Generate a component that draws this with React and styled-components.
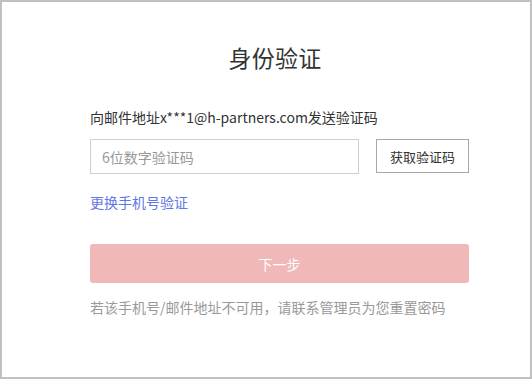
import React, { useState } from 'react';
import styled, { createGlobalStyle } from 'styled-components';

const GlobalStyle = createGlobalStyle`
  html, body {
    margin: 0;
    padding: 0;
    background: #fff;
  }
  body {
    font-family: "Noto Sans CJK SC", "Noto Sans", sans-serif;
  }
`;

const Frame = styled.div`
  width: 532px;
  height: 379px;
  box-sizing: border-box;
  border: 2px solid #c0c0c0;
  background: #fff;
  display: flex;
  flex-direction: column;
  align-items: flex-start;
  padding-left: 88px;
`;

const Panel = styled.div`
  width: 379px;
  display: flex;
  flex-direction: column;
`;

const Title = styled.h1`
  margin: 39px 0 0;
  padding-right: 9px;
  font-size: 23px;
  font-weight: 400;
  line-height: 32px;
  color: #333;
  text-align: center;
  letter-spacing: 0.3px;
`;

const Label = styled.div`
  margin-top: 34px;
  font-size: 14px;
  line-height: 20px;
  color: #333;
`;

const Row = styled.div`
  margin-top: 12px;
  display: flex;
  align-items: flex-start;
  justify-content: space-between;
`;

const Input = styled.input`
  width: 269px;
  height: 35px;
  box-sizing: border-box;
  border: 1px solid #cfcfcf;
  padding: 0 11px;
  font-family: inherit;
  font-size: 14px;
  color: #333;
  outline: none;
  &::placeholder {
    color: #999;
  }
`;

const CodeButton = styled.button`
  width: 93px;
  height: 34px;
  box-sizing: border-box;
  border: 1px solid #a8a8a8;
  background: #fff;
  font-family: inherit;
  font-size: 13px;
  color: #333;
  padding: 0;
  cursor: pointer;
`;

const Link = styled.a`
  margin-top: 18px;
  align-self: flex-start;
  font-size: 14px;
  line-height: 20px;
  color: #5d77e6;
  text-decoration: none;
  cursor: pointer;
`;

const NextButton = styled.button`
  margin-top: 32px;
  height: 39px;
  border: none;
  border-radius: 3px;
  background: ${(p) => (p.disabled ? '#f0b8b9' : '#e0474f')};
  color: #fff;
  font-family: inherit;
  font-size: 14px;
  cursor: ${(p) => (p.disabled ? 'default' : 'pointer')};
`;

const Hint = styled.div`
  margin-top: 14px;
  font-size: 14px;
  line-height: 20px;
  color: #999;
`;

export default () => {
  const [code, setCode] = useState('');

  return (
    <>
      <GlobalStyle />
      <Frame>
        <Panel>
          <Title>身份验证</Title>
          <Label>向邮件地址x***1@h-partners.com发送验证码</Label>
          <Row>
            <Input
              placeholder="6位数字验证码"
              value={code}
              onChange={(e) => setCode(e.target.value)}
            />
            <CodeButton>获取验证码</CodeButton>
          </Row>
          <Link>更换手机号验证</Link>
          <NextButton disabled={code.length !== 6}>下一步</NextButton>
          <Hint>若该手机号/邮件地址不可用，请联系管理员为您重置密码</Hint>
        </Panel>
      </Frame>
    </>
  );
};
